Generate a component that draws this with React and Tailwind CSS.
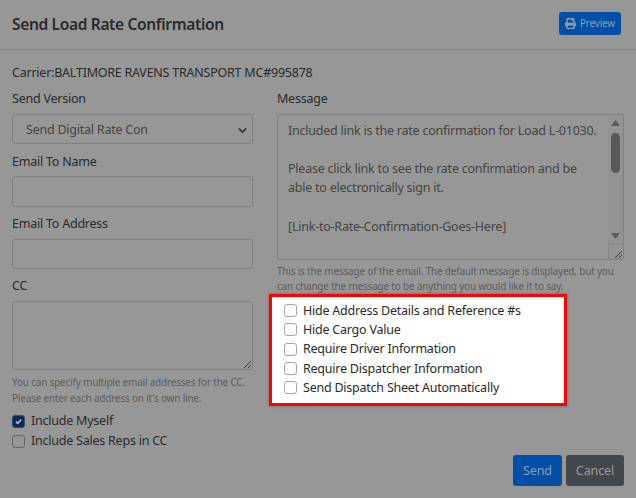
import React from 'react';
import { ChevronDown } from 'lucide-react';

const font = { fontFamily: '"Noto Sans", sans-serif' };

function Label({ children }) {
  return <div className="text-[12.5px] leading-[16px] tracking-[-0.23px] text-[#2a2a2a] h-[16px]">{children}</div>;
}

function Field({ className = '' }) {
  return <div className={`border border-[#7f7f84] rounded-[3px] ${className}`} />;
}

function Grip({ className = '' }) {
  return (
    <svg viewBox="0 0 10 10" className={`absolute w-[10px] h-[10px] ${className}`}>
      <path d="M2 9 L9 2 M6 9 L9 6" stroke="#3a3a3a" strokeWidth="1" fill="none" />
    </svg>
  );
}

function Check({ children, checked, tone = 'dim' }) {
  const dim = tone === 'dim';
  return (
    <div className="flex items-center h-[20px] gap-[6px]">
      {checked ? (
        <span className="w-[13px] h-[13px] rounded-[3px] bg-[#0a2a5c] border border-[#3a4a6a] flex items-center justify-center">
          <svg viewBox="0 0 12 12" className="w-[9px] h-[9px]"><path d="M2.5 6.2 L5 8.5 L9.5 3.5" stroke="#bdbdbd" strokeWidth="2" fill="none" /></svg>
        </span>
      ) : (
        <span className={`w-[13px] h-[13px] rounded-[3px] border ${dim ? 'border-[#66666a]' : 'border-[#a5a5a5] bg-white'}`} />
      )}
      <span className="text-[12.5px] leading-[16px] tracking-[-0.23px] text-[#2a2a2a]">{children}</span>
    </div>
  );
}

export default function App() {
  return (
    <div style={font} className="w-[636px] h-[498px] bg-[#979797] overflow-hidden flex flex-col">
      <div className="h-[50px] shrink-0 border-b border-[#84848a] flex items-center justify-between pl-[12px] pr-[15px]">
        <div className="text-[15.5px] tracking-[-0.33px] font-semibold text-[#2a2a2a]">Send Load Rate Confirmation</div>
        <div className="w-[62px] h-[23px] rounded-[3px] bg-[#0050a8] flex items-center justify-center gap-[4px] -mt-[3px]">
          <svg viewBox="0 0 512 512" className="w-[11px] h-[11px]" fill="#8e9cb0">
            <path d="M448 192V77.25c0-8.49-3.37-16.62-9.37-22.63L393.37 9.37c-6-6-14.14-9.37-22.63-9.37H96C78.33 0 64 14.33 64 32v160c-35.35 0-64 28.65-64 64v112c0 8.84 7.16 16 16 16h48v96c0 17.67 14.33 32 32 32h320c17.67 0 32-14.33 32-32v-96h48c8.84 0 16-7.16 16-16V256c0-35.35-28.65-64-64-64zm-64 256H128v-96h256v96zm0-224H128V64h192v48c0 8.84 7.16 16 16 16h48v96zm48 72c-13.25 0-24-10.75-24-24 0-13.26 10.75-24 24-24s24 10.74 24 24c0 13.25-10.75 24-24 24z" />
          </svg>
          <span className="text-[10px] tracking-[-0.2px] text-[#8e9cb0]">Preview</span>
        </div>
      </div>

      <div className="pl-[12px] pt-[15px] h-[40px] text-[12.5px] leading-[16px] tracking-[-0.23px] text-[#2a2a2a] shrink-0">Carrier:BALTIMORE RAVENS TRANSPORT MC#995878</div>

      <div className="flex pl-[12px] gap-[24px]">
        <div className="w-[241px] flex flex-col">
          <div className="pt-[1px] h-[16px]"><Label>Send Version</Label></div>
          <div className="mt-[8px] h-[30px] border border-[#7f7f84] rounded-[3px] flex items-center justify-between pl-[13px] pr-[3px] pt-[3px] text-[12.5px] tracking-[-0.23px] text-[#444]">
            <span>Send Digital Rate Con</span>
            <ChevronDown size={13} strokeWidth={3} color="#333" />
          </div>
          <div className="mt-[10px]"><Label>Email To Name</Label></div>
          <Field className="mt-[6px] h-[31px]" />
          <div className="mt-[9px]"><Label>Email To Address</Label></div>
          <Field className="mt-[7px] h-[30px]" />
          <div className="mt-[9px]"><Label>CC</Label></div>
          <div className="relative mt-[7px] h-[69px] border border-[#7f7f84] rounded-[3px]">
            <Grip className="right-0 bottom-0" />
          </div>
          <div className="mt-[4px] text-[10px] leading-[16px] tracking-[-0.2px] text-[#5c5c5c]">
            You can specify multiple email addresses for the CC.<br />Please enter each address on it's own line.
          </div>
          <div className="mt-[5px]"><Check checked>Include Myself</Check></div>
          <Check>Include Sales Reps in CC</Check>
        </div>

        <div className="w-[347px] flex flex-col">
          <div className="pt-[1px] h-[16px]"><Label>Message</Label></div>
          <div className="relative mt-[8px] h-[146px] border border-[#7f7f84] rounded-[3px] pl-[10px] pt-[6px] text-[12.5px] leading-[19px] tracking-[-0.23px] text-[#444] overflow-hidden">
            <div>Included link is the rate confirmation for Load L-01030.</div>
            <div className="mt-[19px] w-[310px]">Please click link to see the rate confirmation and be able to electronically sign it.</div>
            <div className="mt-[20px]">[Link-to-Rate-Confirmation-Goes-Here]</div>
            <div className="absolute right-0 top-0 bottom-0 w-[15px] bg-[#939393]">
              <svg viewBox="0 0 9 6" className="absolute left-[3px] top-[5px] w-[9px] h-[6px]"><path d="M4.5 0 L9 6 H0 Z" fill="#5a5a5a" /></svg>
              <div className="absolute left-[3px] top-[18px] w-[9px] h-[40px] rounded-[5px] bg-[#595959]" />
              <svg viewBox="0 0 9 6" className="absolute left-[3px] bottom-[20px] w-[9px] h-[6px]"><path d="M0 0 H9 L4.5 6 Z" fill="#5a5a5a" /></svg>
              <div className="absolute right-0 bottom-0 w-[15px] h-[15px] border-t border-l border-[#84848a]" />
            </div>
            <Grip className="right-0 bottom-0" />
          </div>
          <div className="mt-[4px] text-[10px] leading-[15px] tracking-[-0.2px] text-[#5c5c5c]">
            This is the message of the email. The default message is displayed, but you can change the message to be anything you would like it to say.
          </div>
          <div className="-ml-[8px] w-[298px] h-[112px] border-[3px] border-[#ff0000] bg-white pl-[12px] pt-[4px] shadow-[0_0_3px_rgba(0,0,0,0.3)]">
            <div className="flex flex-col gap-0 [&>div]:h-[19.3px]">
              <Check tone="light">Hide Address Details and Reference #s</Check>
              <Check tone="light">Hide Cargo Value</Check>
              <Check tone="light">Require Driver Information</Check>
              <Check tone="light">Require Dispatcher Information</Check>
              <Check tone="light">Send Dispatch Sheet Automatically</Check>
            </div>
          </div>
          <div className="flex justify-end gap-[4px] mt-[49px]">
            <div className="w-[49px] h-[31px] rounded-[3px] bg-[#0050a8] flex items-center justify-center pt-[2px] text-[12.5px] tracking-[-0.1px] text-[#8e9cb0]">Send</div>
            <div className="w-[58px] h-[31px] rounded-[3px] bg-[#44484c] flex items-center justify-center pt-[2px] text-[12.5px] tracking-[-0.1px] text-[#989a9c]">Cancel</div>
          </div>
        </div>
      </div>
    </div>
  );
}
